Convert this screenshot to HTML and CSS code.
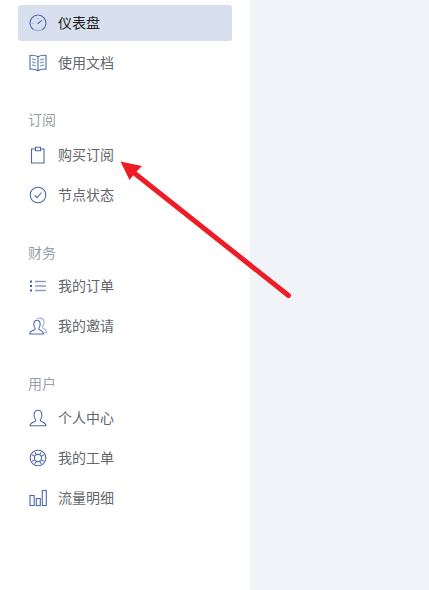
FILE: index.html
```html
<!DOCTYPE html>
<html lang="zh-CN">
<head>
<meta charset="utf-8">
<title>仪表盘</title>
<link rel="stylesheet" href="styles.css">
</head>
<body>
<div class="layout">
  <nav class="sidebar">
    <ul class="group group-top">
      <li class="item active"><svg class="icon" viewBox="0 0 18 18"><path d="M4.700 15.800A8 8 0 1 1 13.300 15.800"/><path class="soft" d="M4.700 15.800Q9 17.400 13.300 15.800"/><path d="M8.600 9.800L12.800 6.400"/><path class="soft" d="M3.400 9.500h1.400M9 3.800v1.400"/></svg><span>仪表盘</span></li>
      <li class="item"><svg class="icon" viewBox="0 0 18 18"><path d="M1 1.500Q5.500 .8 9 2.800Q12.500 .8 17 1.500V15.200Q12.500 14.500 9 16.800Q5.500 14.500 1 15.200Z"/><path d="M9 2.800V16.800"/><path class="line" d="M3.200 5L6.800 5.900M3.200 8L6.800 8.900M3.200 11L6.800 11.900M14.800 5L11.200 5.900M14.800 8L11.200 8.900M14.800 11L11.200 11.900"/></svg><span>使用文档</span></li>
    </ul>
    <h2 class="heading heading-a">订阅</h2>
    <ul class="group">
      <li class="item"><svg class="icon" viewBox="0 0 18 18"><path d="M6.500 3H2.500V17H15V3H11.500"/><path d="M6.500 4.800V1.300H11.500V4.800Z"/></svg><span>购买订阅</span></li>
      <li class="item"><svg class="icon" viewBox="0 0 18 18"><circle cx="9" cy="9" r="7.800"/><path d="M5.500 9.200L8 11.700L12.500 6.500"/></svg><span>节点状态</span></li>
    </ul>
    <h2 class="heading">财务</h2>
    <ul class="group">
      <li class="item"><svg class="icon" viewBox="0 0 18 18"><path class="dots" d="M1 4.500H3M1 9H3M1 13.500H3"/><path class="line" d="M6 4.500H17M6 9H17M6 13.500H17"/></svg><span>我的订单</span></li>
      <li class="item"><svg class="icon" viewBox="0 0 18 18"><path d="M.8 17C.8 14 3.500 14 5.500 12.800C6.500 12 6.300 11 5.500 10C4.300 8 4.500 3.200 8 3.200C11.500 3.200 11.700 8 10.500 10C9.700 11 9.500 12 10.500 12.800C12.500 14 14.500 14 14.500 17Z"/><path class="soft" d="M8 2C9.500 .5 14.500 .3 15 4.500C15.300 7 14 8.500 13.500 9.500C13.200 10.500 14 11.300 15.500 12C17 12.700 17.500 13.500 17.500 15.800H15"/></svg><span>我的邀请</span></li>
    </ul>
    <h2 class="heading heading-c">用户</h2>
    <ul class="group">
      <li class="item"><svg class="icon" viewBox="0 0 18 18"><path d="M1 16.800C1 13.800 3.500 13.500 6 12.300C7 11.500 6.800 10.500 6 9.500C4.500 7.500 4.500 1.200 9 1.200C13.500 1.200 13.500 7.500 12 9.500C11.200 10.500 11 11.500 12 12.300C14.500 13.500 17 13.800 17 16.800Z"/></svg><span>个人中心</span></li>
      <li class="item"><svg class="icon" viewBox="0 0 18 18"><circle cx="9" cy="9" r="7.800"/><circle cx="9" cy="9" r="3.600"/><path d="M5.800 3.200L7.400 5.800M12.200 3.200L10.600 5.800M5.800 14.800L7.400 12.200M12.200 14.800L10.600 12.200M3.200 5.800L5.800 7.400M3.200 12.200L5.800 10.600M14.800 5.800L12.200 7.400M14.800 12.200L12.200 10.600"/></svg><span>我的工单</span></li>
      <li class="item"><svg class="icon" viewBox="0 0 18 18"><rect x="1" y="6.500" width="4.200" height="10"/><rect x="7.300" y="9.500" width="4" height="7"/><rect x="13.300" y="1.500" width="4" height="15"/></svg><span>流量明细</span></li>
    </ul>
  </nav>
  <main class="content"></main>
</div>
<svg class="arrow" viewBox="0 0 429 590" width="429" height="590"><path class="shaft" d="M288.500 295.500L133 172"/><path class="head" d="M120.500 161.500L142 166L135.500 172.500L129.500 180Z"/></svg>
</body>
</html>
```

FILE: styles.css
```css
* { box-sizing: border-box; }
html, body { margin: 0; height: 100%; overflow: hidden; }
body {
  font-family: "Noto Sans CJK SC", "Noto Sans", sans-serif;
  font-size: 14px;
  background: #fff;
}
.layout { display: flex; height: 590px; }
.sidebar { width: 250px; flex: none; background: #fff; padding: 5px 18px 0; }
.content { flex: 1; background: #f0f3f8; }
.group { list-style: none; margin: 0; padding: 0; display: flex; flex-direction: column; gap: 4px; }
.item {
  display: flex;
  align-items: center;
  gap: 11px;
  height: 36px;
  padding-left: 11px;
  padding-bottom: 2px;
  border-radius: 3px;
  color: #63676c;
  line-height: 20px;
}
.item.active { background: #d8dfee; color: #1c1e21; }
.group + .heading { margin-top: 29px; }
.group-top + .heading { margin-top: 28px; }
.heading {
  margin: 0 0 6px;
  padding-left: 10px;
  height: 20px;
  font-size: 14px;
  line-height: 20px;
  font-weight: 400;
  color: #9a9fa6;
}
.group + .heading-a { margin-bottom: 8px; }
.group + .heading-c { margin-bottom: 7px; }
.icon { width: 18px; height: 18px; flex: none; margin-top: 2px; fill: none; stroke: #4f69ae; stroke-width: 1.1; }
.icon .soft { stroke: #9fb0d6; }
.icon .line { stroke: #8a9dcb; stroke-width: 1.3; }
.icon .dots { stroke: #3d5aa5; stroke-width: 2; }
.arrow { position: absolute; left: 0; top: 0; pointer-events: none; }
.shaft { fill: none; stroke: #ee1c25; stroke-width: 5; stroke-linecap: round; }
.head { fill: #ee1c25; }
```
